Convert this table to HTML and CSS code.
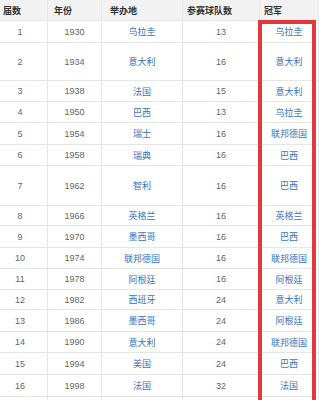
FILE: index.html
```html
<!DOCTYPE html>
<html lang="zh">
<head>
<meta charset="utf-8">
<title>历届世界杯</title>
<link rel="stylesheet" href="styles.css">
</head>
<body>
<div class="page">
  <div class="table">
    <div class="row head r21"><div class="c c1">届数</div><div class="c c2">年份</div><div class="c c3">举办地</div><div class="c c4">参赛球队数</div><div class="c c5">冠军</div></div>
    <div class="row r22"><div class="c c1">1</div><div class="c c2">1930</div><div class="c c3"><a>乌拉圭</a></div><div class="c c4">13</div><div class="c c5"><a>乌拉圭</a></div></div>
    <div class="row r38"><div class="c c1">2</div><div class="c c2">1934</div><div class="c c3"><a>意大利</a></div><div class="c c4">16</div><div class="c c5"><a>意大利</a></div></div>
    <div class="row r21"><div class="c c1">3</div><div class="c c2">1938</div><div class="c c3"><a>法国</a></div><div class="c c4">15</div><div class="c c5"><a>意大利</a></div></div>
    <div class="row r21"><div class="c c1">4</div><div class="c c2">1950</div><div class="c c3"><a>巴西</a></div><div class="c c4">13</div><div class="c c5"><a>乌拉圭</a></div></div>
    <div class="row r22"><div class="c c1">5</div><div class="c c2">1954</div><div class="c c3"><a>瑞士</a></div><div class="c c4">16</div><div class="c c5"><a>联邦德国</a></div></div>
    <div class="row r21"><div class="c c1">6</div><div class="c c2">1958</div><div class="c c3"><a>瑞典</a></div><div class="c c4">16</div><div class="c c5"><a>巴西</a></div></div>
    <div class="row r40"><div class="c c1">7</div><div class="c c2">1962</div><div class="c c3"><a>智利</a></div><div class="c c4">16</div><div class="c c5"><a>巴西</a></div></div>
    <div class="row r20"><div class="c c1">8</div><div class="c c2">1966</div><div class="c c3"><a>英格兰</a></div><div class="c c4">16</div><div class="c c5"><a>英格兰</a></div></div>
    <div class="row r22"><div class="c c1">9</div><div class="c c2">1970</div><div class="c c3"><a>墨西哥</a></div><div class="c c4">16</div><div class="c c5"><a>巴西</a></div></div>
    <div class="row r21"><div class="c c1">10</div><div class="c c2">1974</div><div class="c c3"><a>联邦德国</a></div><div class="c c4">16</div><div class="c c5"><a>联邦德国</a></div></div>
    <div class="row r21"><div class="c c1">11</div><div class="c c2">1978</div><div class="c c3"><a>阿根廷</a></div><div class="c c4">16</div><div class="c c5"><a>阿根廷</a></div></div>
    <div class="row r20"><div class="c c1">12</div><div class="c c2">1982</div><div class="c c3"><a>西班牙</a></div><div class="c c4">24</div><div class="c c5"><a>意大利</a></div></div>
    <div class="row r22"><div class="c c1">13</div><div class="c c2">1986</div><div class="c c3"><a>墨西哥</a></div><div class="c c4">24</div><div class="c c5"><a>阿根廷</a></div></div>
    <div class="row r21"><div class="c c1">14</div><div class="c c2">1990</div><div class="c c3"><a>意大利</a></div><div class="c c4">24</div><div class="c c5"><a>联邦德国</a></div></div>
    <div class="row r22"><div class="c c1">15</div><div class="c c2">1994</div><div class="c c3"><a>美国</a></div><div class="c c4">24</div><div class="c c5"><a>巴西</a></div></div>
    <div class="row r22"><div class="c c1">16</div><div class="c c2">1998</div><div class="c c3"><a>法国</a></div><div class="c c4">32</div><div class="c c5"><a>法国</a></div></div>
    <div class="row r21"><div class="c c1"></div><div class="c c2"></div><div class="c c3"></div><div class="c c4"></div><div class="c c5"></div></div>
  </div>
  <div class="highlight"></div>
</div>
</body>
</html>
```
FILE: styles.css
```css
html, body {
  margin: 0;
  padding: 0;
  background: #ffffff;
  overflow: hidden;
}
.page {
  position: relative;
  width: 319px;
  height: 400px;
  overflow: hidden;
  font-family: "Liberation Sans", "Noto Sans CJK SC", sans-serif;
  font-size: 9px;
  color: #666666;
}
.table {
  display: flex;
  flex-direction: column;
}
.row {
  display: grid;
  grid-template-columns: 48px 54px 81px 77px 59px;
  box-sizing: border-box;
  border-bottom: 1px solid #e6e6e6;
}
.r20 { height: 20px; }
.r21 { height: 21px; }
.r22 { height: 22px; }
.r38 { height: 38px; }
.r40 { height: 40px; }
.c {
  display: flex;
  align-items: center;
  justify-content: center;
  box-sizing: border-box;
  border-right: 1px solid #e6e6e6;
  white-space: nowrap;
  overflow: hidden;
}
.c1 { padding-right: 7px; }
.c a {
  color: #3574c2;
  text-decoration: none;
}
.head {
  background: #f2f2f2;
  font-weight: bold;
  color: #333333;
}
.head .c {
  justify-content: flex-start;
}
.head .c1 { padding-left: 3px; padding-right: 0; }
.head .c2 { padding-left: 6px; }
.head .c3 { padding-left: 8px; }
.head .c4 { padding-left: 4px; }
.head .c5 { padding-left: 4px; }
.highlight {
  position: absolute;
  left: 258px;
  top: 20px;
  width: 58px;
  height: 400px;
  box-sizing: border-box;
  border: 4px solid #e0383c;
}
```
